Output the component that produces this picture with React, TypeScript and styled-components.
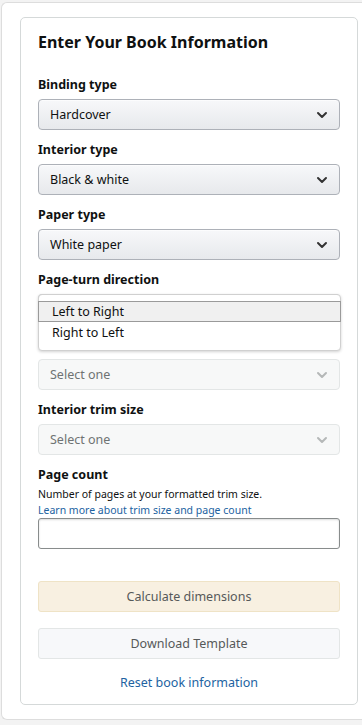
import React from "react";
import styled, { createGlobalStyle } from "styled-components";

const Global = createGlobalStyle`
  html, body { margin: 0; padding: 0; background: #f3f3f3; overflow: hidden; }
  body { font-family: "Noto Sans", "Open Sans", Arial, sans-serif; color: #0f1111; }
  * { box-sizing: border-box; }
`;

const Frame = styled.div`
  margin: 2px 0 0 1px;
  width: 361px;
  background: #fff;
  border: 1px solid #dddddd;
  border-right: none;
  border-radius: 6px 0 0 6px;
  padding: 14px 0 14px 18px;
`;

const Card = styled.div`
  width: 338px;
  border: 1px solid #d5d9d9;
  border-radius: 5px;
  background: #fff;
  padding: 12px 17px 11px 17px;
  display: flex;
  flex-direction: column;
`;

const Title = styled.h1`
  margin: 0 0 21px 0;
  font-size: 16px;
  line-height: 24px;
  font-weight: 700;
  color: #0f1111;
`;

const Field = styled.div`
  position: relative;
  display: flex;
  flex-direction: column;
  margin-bottom: 10px;
`;

const Label = styled.div`
  font-size: 12.5px;
  line-height: 19px;
  font-weight: 700;
  color: #0f1111;
  margin-bottom: 5px;
  min-height: 19px;
`;

const SelectBox = styled.div<{ $disabled?: boolean }>`
  height: 31px;
  display: flex;
  align-items: center;
  justify-content: space-between;
  padding: 0 11px 0 11px;
  border-radius: 4px;
  font-size: 12.5px;
  border: 1px solid ${(p) => (p.$disabled ? "#e3e6e6" : "#adb1b8")};
  color: ${(p) => (p.$disabled ? "#6f7373" : "#0f1111")};
  background: ${(p) =>
    p.$disabled ? "#f7f8f8" : "linear-gradient(to bottom, #f7f8fa, #e7e9ec)"};
  box-shadow: ${(p) => (p.$disabled ? "none" : "0 1px 0 rgba(255,255,255,.6) inset")};
`;

const Chevron = ({ color }: { color: string }) => (
  <svg width="12" height="8" viewBox="0 0 12 8" aria-hidden="true">
    <path d="M2 2 L6 6 L10 2" fill="none" stroke={color} strokeWidth="2" strokeLinecap="round" strokeLinejoin="round" />
  </svg>
);

const Listbox = styled.div`
  position: absolute;
  left: 0;
  right: -1px;
  top: 24px;
  height: 57px;
  background: #fff;
  border: 1px solid #d0d0d0;
  border-radius: 4px;
  box-shadow: 0 1px 3px rgba(0, 0, 0, 0.18);
  padding-top: 6px;
  z-index: 2;
`;

const Option = styled.div<{ $active?: boolean }>`
  height: 21px;
  display: flex;
  align-items: center;
  padding-left: 13px;
  font-size: 12.5px;
  color: #0f1111;
  margin: 0 -1px;
  background: ${(p) => (p.$active ? "#f0f0f0" : "transparent")};
  border: 1px solid ${(p) => (p.$active ? "#9a9a9a" : "transparent")};
`;

const Help = styled.div`
  font-size: 10.5px;
  line-height: 16px;
  color: #0f1111;
`;

const HelpLink = styled.a`
  font-size: 10.5px;
  line-height: 16px;
  color: #2162a1;
  text-decoration: none;
`;

const TextInput = styled.input`
  height: 31px;
  width: 100%;
  border: 1px solid #888c8c;
  border-radius: 3px;
  box-shadow: 0 1px 2px rgba(15, 17, 17, 0.15) inset;
  font-family: inherit;
  font-size: 13px;
  padding: 0 8px;
  outline: none;
`;

const Button = styled.button<{ $warm?: boolean }>`
  height: 31px;
  width: 100%;
  border-radius: 3px;
  font-family: inherit;
  font-size: 12.5px;
  color: #565959;
  border: 1px solid ${(p) => (p.$warm ? "#efe3c6" : "#e3e6e6")};
  background: ${(p) => (p.$warm ? "#f8f0e1" : "#f7f8fa")};
  display: flex;
  align-items: center;
  justify-content: center;
`;

const Actions = styled.div`
  display: flex;
  flex-direction: column;
  gap: 16px;
  margin-top: 32px;
`;

const Reset = styled.a`
  margin-top: 14px;
  text-align: center;
  font-size: 12.5px;
  line-height: 20px;
  color: #2162a1;
  text-decoration: none;
`;

type Sel = { label: string; value: string; disabled?: boolean; open?: boolean };

const fields: Sel[] = [
  { label: "Binding type", value: "Hardcover" },
  { label: "Interior type", value: "Black & white" },
  { label: "Paper type", value: "White paper" },
  { label: "Page-turn direction", value: "", open: true },
  { label: "", value: "Select one", disabled: true },
  { label: "Interior trim size", value: "Select one", disabled: true },
];

export default function App() {
  return (
    <>
      <Global />
      <Frame>
        <Card>
          <Title>Enter Your Book Information</Title>
          {fields.map((f, i) => (
            <Field key={i}>
              <Label>{f.label}</Label>
              <SelectBox $disabled={f.disabled}>
                <span>{f.value}</span>
                <Chevron color={f.disabled ? "#b5b8b8" : "#333"} />
              </SelectBox>
              {f.open && (
                <Listbox>
                  <Option $active>Left to Right</Option>
                  <Option>Right to Left</Option>
                </Listbox>
              )}
            </Field>
          ))}
          <Field style={{ marginBottom: 0 }}>
            <Label style={{ marginBottom: 2 }}>Page count</Label>
            <Help>Number of pages at your formatted trim size.</Help>
            <HelpLink href="#">Learn more about trim size and page count</HelpLink>
            <TextInput />
          </Field>
          <Actions>
            <Button $warm>Calculate dimensions</Button>
            <Button>Download Template</Button>
          </Actions>
          <Reset href="#">Reset book information</Reset>
        </Card>
      </Frame>
    </>
  );
}
